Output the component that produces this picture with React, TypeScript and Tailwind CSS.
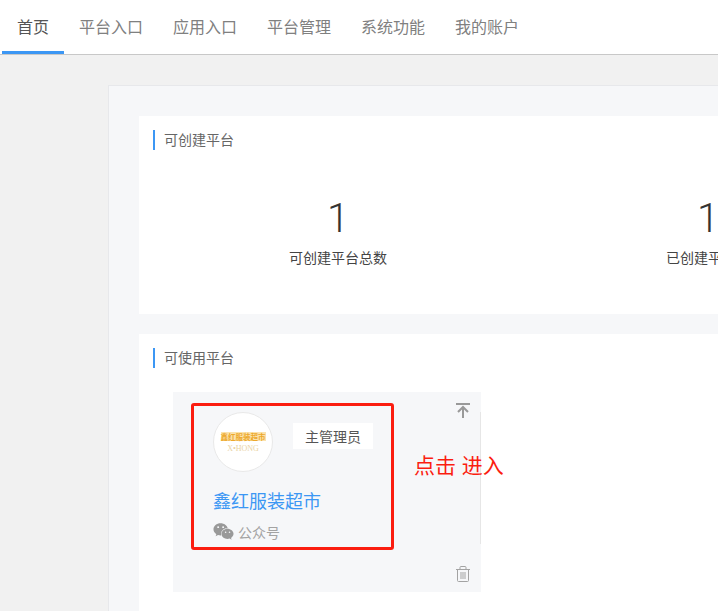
import { FaWeixin } from "react-icons/fa";

const font = { fontFamily: '"Noto Sans CJK SC", "Liberation Sans", sans-serif' };

const tabs = ["首页", "平台入口", "应用入口", "平台管理", "系统功能", "我的账户"];

const SectionTitle = ({ title }: { title: string }) => (
  <div className="flex h-5 items-center border-l-2 border-[#3c97f4] pb-[2px] pl-[9px] text-[14px] text-[#666]">
    {title}
  </div>
);

const Stat = ({ label }: { label: string }) => (
  <div className="flex w-[370px] flex-col items-center">
    <div className="font-['Roboto'] text-[40px] font-light leading-[46px] text-[#333]">1</div>
    <div className="mt-[5px] text-[14px] leading-5 text-[#444]">{label}</div>
  </div>
);

const PlatformCard = () => (
  <div className="relative flex h-[200px] w-[308px] bg-[#f6f7f9] pl-10 pt-5">
    <div className="flex flex-col">
      <div className="flex items-start">
        <div className="flex h-[60px] w-[60px] flex-col items-center justify-center rounded-full border border-[#e9e9e9] bg-white">
          <div className="whitespace-nowrap bg-[#fbe3ad] text-[7.500px] font-bold leading-[9px] text-[#eda92c]">鑫红服装超市</div>
          <div className="mt-[4px] whitespace-nowrap font-['Liberation_Serif'] text-[8px] leading-[8px] text-[#e9d3a4]">X•HONG</div>
        </div>
        <div className="ml-5 mt-[11px] flex h-[26px] w-20 items-center justify-center bg-white text-[14px] text-[#555]">主管理员</div>
      </div>
      <div className="mt-[15px] text-[18px] leading-[26px] text-[#3c97f4]">鑫红服装超市</div>
      <div className="mt-[8px] flex items-center text-[14px] leading-5 text-[#a3a3a3]">
        <FaWeixin className="h-[21px] w-[21px] text-[#999]" />
        <span className="ml-[4px]">公众号</span>
      </div>
    </div>
    <div className="absolute right-0 top-5 h-[132px] w-px bg-[#e6e6e6]" />
    <svg className="absolute left-[282px] top-[11px] h-[15px] w-[16px]" viewBox="0 0 16 15" fill="none" stroke="#999" strokeWidth="2">
      <path d="M1 1h14M8 15V4M3 9l5-5 5 5" />
    </svg>
    <svg className="absolute left-[283px] top-[174px] h-[16px] w-[14px]" viewBox="0 0 14 16" fill="none" stroke="#a3a3a3" strokeWidth="1">
      <path d="M0 3.500h14M4 3.500V1.500a1 1 0 0 1 1-1h4a1 1 0 0 1 1 1v2M1.500 3.500v11a1 1 0 0 0 1 1h9a1 1 0 0 0 1-1v-11M5 6v7M7 6v7M9 6v7" />
    </svg>
  </div>
);

export default function App() {
  return (
    <div className="relative h-[611px] w-[718px] overflow-hidden bg-[#f1f1f1]" style={font}>
      <div className="flex h-[55px] items-stretch border-b border-[#c8c8c8] bg-white pl-[2px]">
        {tabs.map((tab, i) => (
          <div
            key={tab}
            className={
              i === 0
                ? "flex items-center border-b-[3px] border-[#3c97f4] px-[15px] text-[16px] text-[#555]"
                : "flex items-center border-b-[3px] border-transparent px-[15px] text-[16px] text-[#808080]"
            }
          >
            {tab}
          </div>
        ))}
      </div>

      <div className="ml-[108px] mt-[30px] w-[1100px] border border-[#e7e8eb] bg-[#f6f7f9] p-[30px]">
        <div className="h-[198px] bg-white px-[14px] pt-[14px]">
          <SectionTitle title="可创建平台" />
          <div className="mt-[46px] flex">
            <Stat label="可创建平台总数" />
            <Stat label="已创建平台数" />
          </div>
        </div>
        <div className="mt-5 h-[300px] bg-white px-[14px] pt-[14px]">
          <SectionTitle title="可使用平台" />
          <div className="ml-5 mt-6">
            <PlatformCard />
          </div>
        </div>
      </div>

      <div className="absolute left-[191px] top-[403px] h-[147px] w-[203px] rounded-[3px] border-[3px] border-[#fb1d10]" />
      <div className="absolute left-[414px] top-[450px] whitespace-nowrap text-[21px] leading-7 text-[#fb1d10] [word-spacing:1px]">点击 进入</div>
    </div>
  );
}
